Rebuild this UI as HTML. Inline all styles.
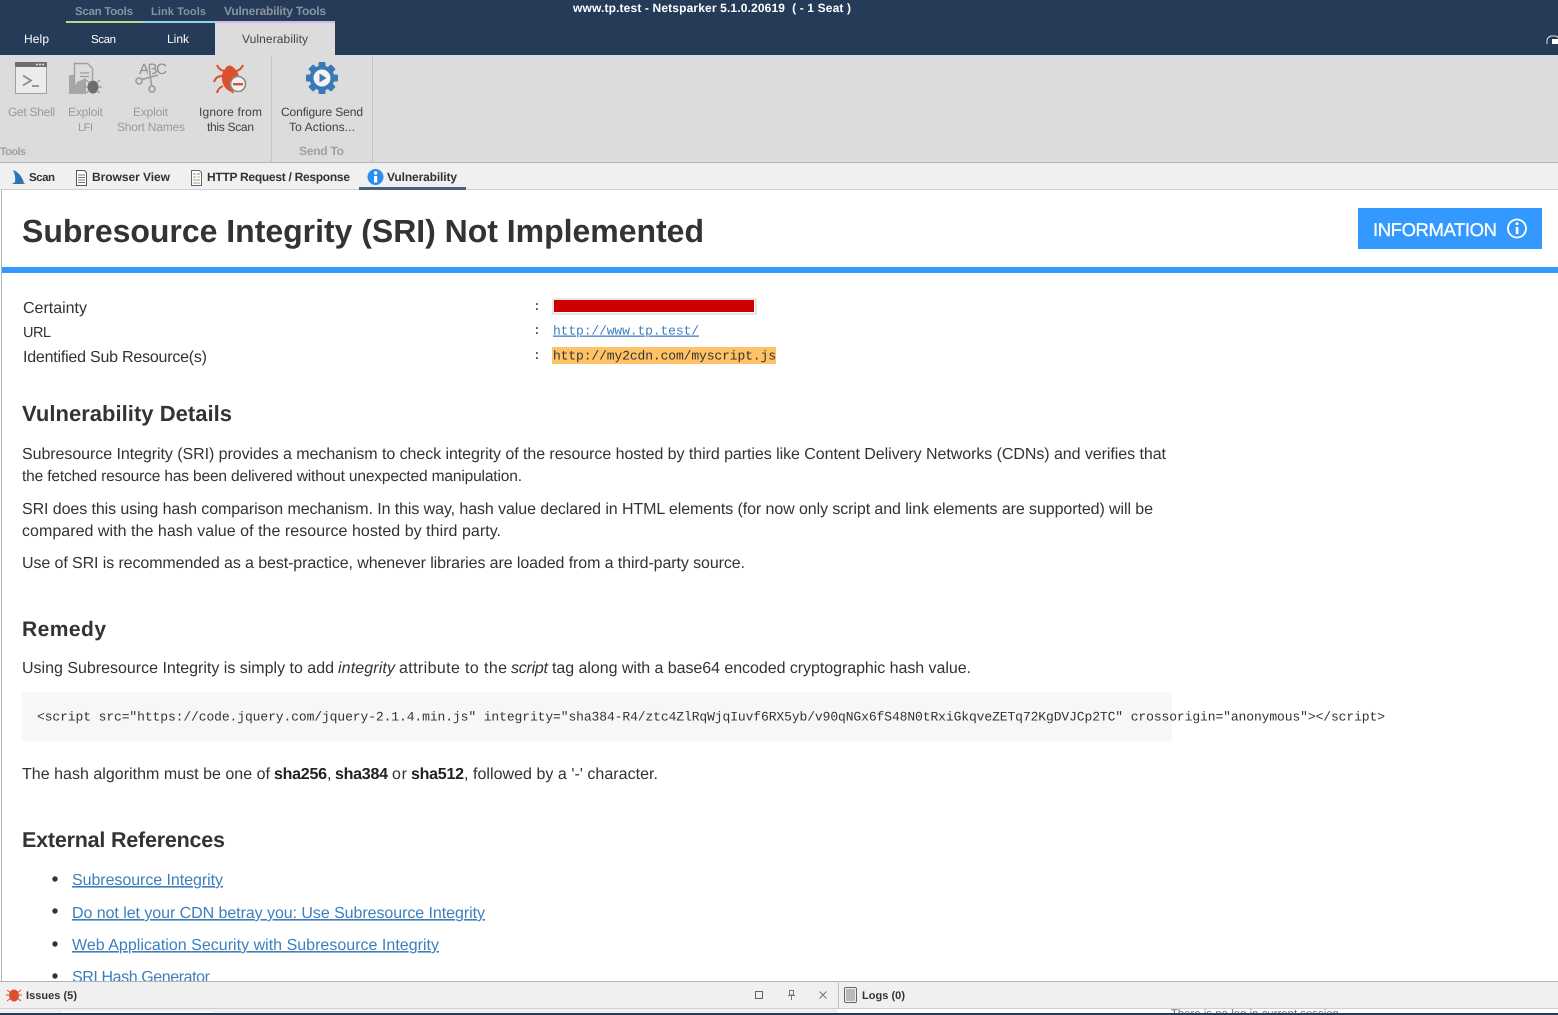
<!DOCTYPE html>
<html><head><meta charset="utf-8"><title>Netsparker</title>
<style>
html,body{margin:0;padding:0;background:#fff;width:1558px;height:1015px;overflow:hidden}
svg{display:block;position:absolute;left:0;top:0}
text{font-family:"Liberation Sans",sans-serif;white-space:pre}
.m{font-family:"Liberation Mono",monospace}
.b{fill:#333;font-size:16px}
.h{fill:#333;font-size:22px;font-weight:bold}
.r{font-size:12px;fill:#3f3f46}
.g{font-size:12px;fill:#9a9a9a}
.t{font-size:12px;fill:#333;font-weight:bold}
.l{fill:#3d7fbd;font-size:16px;text-decoration:underline}
</style></head><body>
<svg width="1558" height="1015" viewBox="0 0 1558 1015" text-rendering="geometricPrecision">
<!-- frame -->
<rect width="1558" height="55" fill="#253b57"/>
<rect x="66" y="21" width="76" height="2" fill="#b4dc8c"/>
<rect x="142" y="21" width="73" height="2" fill="#8fd3ee"/>
<rect x="215" y="21" width="120" height="2" fill="#d4b8ec"/>
<rect x="215" y="23" width="120" height="32" fill="#dcdcdc"/>
<rect y="55" width="1558" height="107" fill="#dcdcdc"/>
<rect x="271" y="55" width="1" height="107" fill="#c4c4c4"/>
<rect x="372" y="55" width="1" height="107" fill="#c4c4c4"/>
<rect y="162" width="1558" height="1" fill="#b4b4b4"/>
<rect y="163" width="1558" height="26" fill="#f0f0f0"/>
<rect y="189" width="1558" height="1" fill="#cfcfcf"/>
<rect x="359" y="187" width="107" height="3" fill="#47627f"/>
<rect x="1" y="190" width="1" height="791" fill="#b4b4b4"/>
<!-- title bar -->
<text x="75" y="15" font-size="11.500" font-weight="bold" fill="#8793a2" textLength="58">Scan Tools</text>
<text x="151" y="15" font-size="11" font-weight="bold" fill="#8793a2" textLength="55">Link Tools</text>
<text x="224" y="15" font-size="12" font-weight="bold" fill="#8793a2" textLength="102">Vulnerability Tools</text>
<text x="573" y="12" font-size="12" font-weight="bold" fill="#fff" textLength="278">www.tp.test - Netsparker 5.1.0.20619  ( - 1 Seat )</text>
<text x="24" y="43" font-size="12" fill="#fff" textLength="25">Help</text>
<text x="91" y="43" font-size="11.500" fill="#fff" textLength="25">Scan</text>
<text x="167" y="43" font-size="12" fill="#fff" textLength="22">Link</text>
<text x="242" y="43" font-size="12" fill="#444" textLength="66">Vulnerability</text>
<path d="M1547 44 v-4 q1-3 4-4 h4 q3 0 3 2" fill="none" stroke="#e4e4e4" stroke-width="1"/>
<rect x="1552" y="39" width="6" height="5" fill="#fff"/>
<!-- Get Shell icon -->
<rect x="15.500" y="62.500" width="31" height="31" fill="#ececec" stroke="#a0a0a0"/>
<rect x="15" y="62" width="32" height="5" fill="#6e6e6e"/>
<path d="M36 64.500h2M39 64.500h2M42 64.500h2" stroke="#ddd" stroke-width="1.400"/>
<path d="M23 75.500l8 5-8 5" fill="none" stroke="#8a8a8a" stroke-width="1.700"/>
<path d="M32 86h7" stroke="#8a8a8a" stroke-width="1.700"/>
<!-- Exploit LFI icon -->
<path d="M69 94V75h5v19z" fill="#a6a6a6"/>
<path d="M74.500 90V63.500h13l5 5V80" fill="#dcdcdc" stroke="#a0a0a0" stroke-width="1.400"/>
<path d="M80 73h9M80 76.500h9" stroke="#9a9a9a" stroke-width="1.200"/>
<path d="M71 94l6-12 9-4v16z" fill="#a6a6a6"/>
<ellipse cx="93" cy="87" rx="5.500" ry="6.500" fill="#6e6e6e"/>
<path d="M86 80l4 3M100 80l-4 3M84 87h4M102 87h-4M86 93l4-3M100 93l-4-3" stroke="#8a8a8a"/>
<!-- ABC scissors icon -->
<text x="139" y="74" font-size="15" fill="#8c8c8c" textLength="28">ABC</text>
<path d="M149 66l2.500 19" stroke="#dcdcdc" stroke-width="4"/>
<path d="M149 66l2.500 19M142 79.500l16-4.500" stroke="#a0a0a0" stroke-width="1.700" fill="none"/>
<circle cx="139" cy="81" r="3" fill="none" stroke="#a0a0a0" stroke-width="1.700"/>
<circle cx="152" cy="89" r="3" fill="none" stroke="#a0a0a0" stroke-width="1.700"/>
<!-- Ignore icon -->
<path d="M225 69Q229 62 235 69Q239 73 239 78L232 92Q224 90 222 80Q221 73 225 69z" fill="#d9512c"/>
<path d="M217 65q2 5 7 6M243 65q-2 5-7 6M214 82q2-6 8-6M217 93q1-5 6-7M233 93q-1-2-2-4" fill="none" stroke="#d9512c" stroke-width="2"/>
<circle cx="238" cy="84" r="7.500" fill="#f2f2f2" stroke="#8a8a8a" stroke-width="1.600"/>
<rect x="233" y="83" width="10" height="2.400" fill="#d9512c"/>
<!-- Configure icon -->
<g transform="translate(322 78)">
<g fill="#3a78b8"><rect x="-3.500" y="-16" width="7" height="32" rx="1"/><rect x="-3.500" y="-16" width="7" height="32" rx="1" transform="rotate(45)"/><rect x="-3.500" y="-16" width="7" height="32" rx="1" transform="rotate(90)"/><rect x="-3.500" y="-16" width="7" height="32" rx="1" transform="rotate(135)"/><circle r="12.500"/></g>
<circle r="8.500" fill="#f4f4f4"/>
<path d="M-2.500-4.500L4.500 0l-7 4.500z" fill="#3a78b8"/>
</g>
<!-- ribbon labels -->
<text class="g" x="8" y="116" textLength="47">Get Shell</text>
<text class="g" x="68" y="116" textLength="35">Exploit</text>
<text class="g" x="78" y="131" style="font-size:11px" textLength="15">LFI</text>
<text class="g" x="133" y="116" textLength="35">Exploit</text>
<text class="g" x="117" y="131" textLength="68">Short Names</text>
<text class="r" x="199" y="116" textLength="63">Ignore from</text>
<text class="r" x="207" y="131" textLength="47">this Scan</text>
<text class="r" x="281" y="116" textLength="82">Configure Send</text>
<text class="r" x="289" y="131" textLength="66">To Actions...</text>
<text x="0" y="155" font-size="11" font-weight="bold" fill="#a0a0a0" textLength="26">Tools</text>
<text x="299" y="155" font-size="12" font-weight="bold" fill="#a0a0a0" textLength="45">Send To</text>
<!-- tab bar -->
<path d="M13 170q8 3 11 13h2l-3 1H12l3-2q1-6-2-12z" fill="#2f75b5"/>
<text class="t" x="29" y="181" style="font-size:11.500px" textLength="26">Scan</text>
<path d="M76.500 170.500h8l2 2v13h-10z" fill="#fff" stroke="#555"/>
<path d="M78 175h7M78 177.500h7M78 180h7M78 182.500h7" stroke="#777"/>
<text class="t" x="92" y="181" textLength="78">Browser View</text>
<path d="M191.500 170.500h8l2 2v13h-10z" fill="#fff" stroke="#666"/>
<path d="M193 174h3" stroke="#e2734a"/><path d="M197 174h3" stroke="#5a9bd4"/><path d="M193 177h3" stroke="#6cb36c"/><path d="M197 177h3" stroke="#d9a441"/><path d="M193 180h7M193 183h7" stroke="#999"/>
<text class="t" x="207" y="181" textLength="143">HTTP Request / Response</text>
<circle cx="375.500" cy="177" r="8" fill="#2b8ef0"/>
<rect x="374" y="176" width="3.200" height="6.500" fill="#fff"/><circle cx="375.600" cy="173" r="1.700" fill="#fff"/>
<text class="t" x="387" y="181" textLength="70">Vulnerability</text>
<!-- heading -->
<text x="22" y="242" font-size="32" font-weight="bold" fill="#333" textLength="682">Subresource Integrity (SRI) Not Implemented</text>
<rect x="1358" y="208" width="184" height="41" fill="#3399ff"/>
<text x="1373" y="236" font-size="18.500" fill="#fff" stroke="#fff" stroke-width=".3" textLength="124">INFORMATION</text>
<circle cx="1517" cy="228.500" r="9" fill="none" stroke="#fff" stroke-width="1.800"/>
<rect x="1515.800" y="227" width="2.600" height="7" fill="#fff"/><circle cx="1517" cy="223.800" r="1.500" fill="#fff"/>
<rect x="2" y="267" width="1556" height="6" fill="#3399ff"/>
<!-- meta -->
<text class="b" x="23" y="313" textLength="64">Certainty</text>
<text class="b" x="23" y="337" style="font-size:14.500px" textLength="28">URL</text>
<text class="b" x="23" y="362" textLength="184">Identified Sub Resource(s)</text>
<text class="m" x="533" y="310" font-size="13" fill="#333">:</text>
<text class="m" x="533" y="334" font-size="13" fill="#333">:</text>
<text class="m" x="533" y="359" font-size="13" fill="#333">:</text>
<rect x="553" y="299" width="203" height="15" fill="#fff" stroke="#ccc"/>
<rect x="554" y="300" width="200" height="12" fill="#cc0000"/>
<text class="m" x="553" y="334.500" font-size="13" fill="#3d7fbd" text-decoration="underline" textLength="146">http://www.tp.test/</text>
<rect x="552" y="347" width="224" height="17" fill="#ffc266"/>
<text class="m" x="553" y="359.500" font-size="13" fill="#333" textLength="223">http://my2cdn.com/myscript.js</text>
<!-- vuln details -->
<text class="h" x="22" y="421" textLength="210">Vulnerability Details</text>
<text class="b" x="22" y="459" textLength="1144">Subresource Integrity (SRI) provides a mechanism to check integrity of the resource hosted by third parties like Content Delivery Networks (CDNs) and verifies that</text>
<text class="b" x="22" y="481" style="font-size:15.500px" textLength="500">the fetched resource has been delivered without unexpected manipulation.</text>
<text class="b" x="22" y="514" textLength="1131">SRI does this using hash comparison mechanism. In this way, hash value declared in HTML elements (for now only script and link elements are supported) will be</text>
<text class="b" x="22" y="536" textLength="479">compared with the hash value of the resource hosted by third party.</text>
<text class="b" x="22" y="568" textLength="723">Use of SRI is recommended as a best-practice, whenever libraries are loaded from a third-party source.</text>
<!-- remedy -->
<text class="h" x="22" y="636" style="font-size:21px" textLength="84">Remedy</text>
<text class="b" x="22" y="673" textLength="312">Using Subresource Integrity is simply to add</text>
<text class="b" x="338" y="673" font-style="italic" textLength="57">integrity</text>
<text class="b" x="399" y="673" textLength="108">attribute to the</text>
<text class="b" x="511" y="673" font-style="italic" textLength="37">script</text>
<text class="b" x="552" y="673" textLength="419">tag along with a base64 encoded cryptographic hash value.</text>
<rect x="22" y="692" width="1150" height="49" fill="#f7f7f7"/>
<text class="m" x="37" y="720.500" font-size="13" fill="#333" textLength="1348">&lt;script src="https://code.jquery.com/jquery-2.1.4.min.js" integrity="sha384-R4/ztc4ZlRqWjqIuvf6RX5yb/v90qNGx6fS48N0tRxiGkqveZETq72KgDVJCp2TC" crossorigin="anonymous"&gt;&lt;/script&gt;</text>
<text class="b" x="22" y="779" textLength="248">The hash algorithm must be one of</text>
<text x="274" y="779" font-size="16" font-weight="bold" fill="#222" textLength="53">sha256</text>
<text class="b" x="327" y="779">,</text>
<text x="335" y="779" font-size="16" font-weight="bold" fill="#222" textLength="53">sha384</text>
<text class="b" x="392" y="779" textLength="15">or</text>
<text x="411" y="779" font-size="16" font-weight="bold" fill="#222" textLength="53">sha512</text>
<text class="b" x="464" y="779" textLength="194">, followed by a '-' character.</text>
<!-- refs -->
<text class="h" x="22" y="847" style="font-size:21.500px" textLength="203">External References</text>
<circle cx="55" cy="879" r="2.700" fill="#333"/>
<text class="l" x="72" y="885" textLength="151">Subresource Integrity</text>
<circle cx="55" cy="911" r="2.700" fill="#333"/>
<text class="l" x="72" y="918" textLength="413">Do not let your CDN betray you: Use Subresource Integrity</text>
<circle cx="55" cy="944" r="2.700" fill="#333"/>
<text class="l" x="72" y="950" textLength="367">Web Application Security with Subresource Integrity</text>
<circle cx="55" cy="976" r="2.700" fill="#333"/>
<text class="l" x="72" y="982" textLength="138">SRI Hash Generator</text>
<!-- bottom -->
<rect y="981" width="1558" height="34" fill="#f0f0f0"/>
<rect y="981" width="1558" height="1" fill="#b4b4b4"/>
<rect y="1008" width="1558" height="1" fill="#d0d0d0"/>
<rect x="838" y="981" width="1" height="28" fill="#c4c4c4"/>
<rect x="838" y="1009" width="720" height="4" fill="#fff"/>
<rect x="62" y="1011" width="150" height="2" fill="#fff"/>
<text x="1171" y="1017" font-size="11" fill="#666" textLength="171">There is no log in current session.</text>
<rect y="1013" width="1558" height="2" fill="#253b57"/>
<ellipse cx="14" cy="995.500" rx="5" ry="6" fill="#d9512c"/>
<path d="M7 990l4 3M21 990l-4 3M6 995h4M22 995h-4M7 1001l4-3M21 1001l-4-3" stroke="#d9512c"/>
<text class="t" x="26" y="999" style="font-size:11px" textLength="51">Issues (5)</text>
<rect x="755.500" y="991.500" width="7" height="7" fill="none" stroke="#666"/>
<path d="M789.500 990.500h4v4.500h-4zM788 995.500h7M791.500 995.500v4.500" fill="none" stroke="#777"/>
<path d="M819.500 991.500l7 7M826.500 991.500l-7 7" stroke="#777"/>
<rect x="844.500" y="987.500" width="12" height="15" rx="1.500" fill="none" stroke="#666"/>
<rect x="846" y="989" width="9" height="12" fill="#b8b8b8"/>
<text class="t" x="862" y="999" style="font-size:11px" textLength="43">Logs (0)</text>
</svg>
</body></html>
